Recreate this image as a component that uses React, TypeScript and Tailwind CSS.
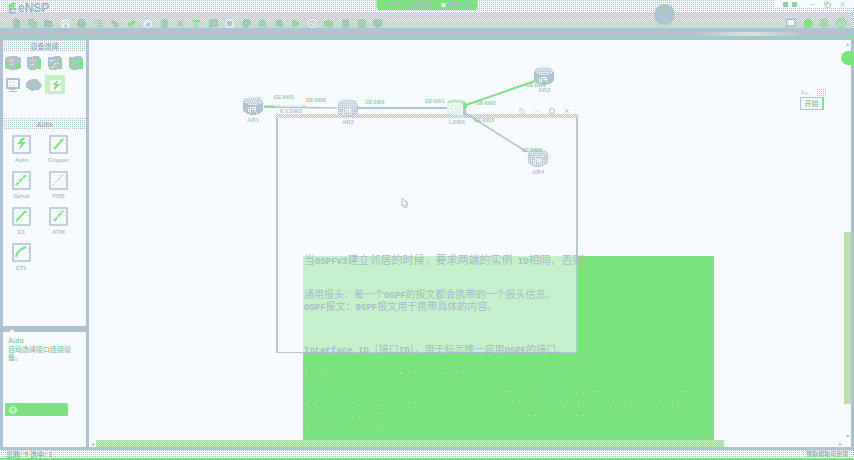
import React from "react";
import {
  FilePlus, FolderOpen, Save, Printer, Undo2, Redo2, Hand, Trash2, X, Type, Square, Palette,
  Play, Pause, StopCircle, Search, ZoomOut, Grid2x2, Monitor, List, Camera, Settings,
  MessageSquare, HelpCircle, Home, Smile, Minus, Copy,
} from "lucide-react";

const tools = [
  ["New", FilePlus], ["New from template", Copy], ["Open", FolderOpen], ["Save", Save], ["Save as", Printer],
  ["Print", List], ["Undo", Undo2], ["Redo", Redo2], ["Pan", Hand], ["Delete", Trash2], ["Remove", X],
  ["Text", Type], ["Note", MessageSquare], ["Shape", Square], ["Palette", Palette], ["Zoom in", Search],
  ["Zoom out", ZoomOut], ["Start", Play], ["Stop", StopCircle], ["Capture", Camera], ["Pause", Pause],
  ["Grid", Grid2x2], ["Screen", Monitor],
] as const;

const cables = [
  { name: "Auto", d: "M10 3 5 9h4l-2 6 7-8h-4l3-4z", fill: true },
  { name: "Copper", d: "M5 14 14 4", w: 2 },
  { name: "Serial", d: "M4 14 8 10 10 8 14 4", w: 2, dash: "4 1" },
  { name: "POS", d: "M4 14 14 4", w: 1, dash: "2 1" },
  { name: "E1", d: "M4 14 14 4", w: 2 },
  { name: "ATM", d: "M5 14 14 4", w: 2, dash: "5 1" },
  { name: "CTL", d: "M4 14C5 8 9 6 14 4", w: 2 },
];

const checker = "bg-[repeating-conic-gradient(#afc2cf_0_25%,#f7fbff_0_50%)] bg-size-[2px_2px]";
const toolbar =
  "bg-[linear-gradient(#afc2cf22_0_11px,#b9dcc9aa_11px),repeating-conic-gradient(#afc2cf_0_25%,#f7fbff_0_50%)] bg-size-[100%_100%,2px_2px]";
const dots = "bg-[conic-gradient(#afc2cf_25%,#f7fbff_0)] bg-size-[2px_2px]";
const greenChecker = "bg-[repeating-conic-gradient(#afc2cf_0_25%,#c5f1c1_0_50%)] bg-size-[2px_2px]";

function Router({ pale = false }: { pale?: boolean }) {
  return (
    <svg width="22" height="20" viewBox="0 0 22 20" aria-hidden="true" shapeRendering="crispEdges">
      <path d="M1 5Q1 1 11 1T21 5V14Q20 18 11 19Q2 18 1 14Z" fill={pale ? "#bfcdd8" : "#afc2cf"} />
      <ellipse cx="11" cy="5" rx="10" ry="4" fill="#d8e3ea" />
      <path d="M3 3h16M2 5h18M3 7h16" stroke="#afc2cf" strokeDasharray="1 1" />
      <path d="M8 17v-6h5v2h-3M12 14l3 3M6 12v4" stroke="#f7fbff" fill="none" />
      {pale && <path d="M2 8h18M2 10h18M2 12h18M2 14h18M4 16h14" stroke="#f7fbff" strokeDasharray="1 1" />}
    </svg>
  );
}

function Switch() {
  return (
    <svg width="22" height="20" viewBox="0 0 22 20" aria-hidden="true">
      <path d="M2 4Q9 0 18 3L20 5V16Q14 19 4 16L2 13Z" fill="#eef8f4" stroke="#c5f1c1" />
      <path d="M2 4Q10 2 19 5" stroke="#b0e9ae" fill="none" strokeWidth="2" />
      <path d="M17 5h3v12h-3z" fill="#afc2cf" />
      <path d="M5 8h10M4 11h10M6 14h9" stroke="#c8d5dd" strokeDasharray="2 2" />
      <path d="M17 6h3M18 9h3" stroke="#7be47f" strokeWidth="2" />
    </svg>
  );
}

function DeviceIcon({ kind }: { kind: number }) {
  return (
    <svg width="16" height="16" viewBox="0 0 16 16" aria-hidden="true" shapeRendering="crispEdges">
      {kind < 4 && (
        <>
          <path d={kind === 0 ? "M0 4Q1 1 8 1T16 4V12Q15 15 8 15T0 12Z" : "M1 2L12 1L15 4V14L5 15L1 12Z"} fill="#afc2cf" />
          <path d={kind === 0 ? "M1 7v5l4 2V9zM15 7v5l-4 2V9z" : "M12 5h3v8l-3 1z"} fill="#7be47f" />
          <path d={kind === 3 ? "M3 4l8 7M3 8l5 5M7 4l5 5" : kind === 2 ? "M4 12h2l3-4h3M3 5h3" : "M4 5h5M6 3v8M4 9h6"} stroke={kind === 3 ? "#7be47f" : "#f7fbff"} strokeDasharray={kind === 2 ? "3 1" : "1 1"} fill="none" />
          <path d="M3 2h8M2 13h9" stroke="#7be47f" strokeDasharray="1 2" />
        </>
      )}
      {kind === 4 && (
        <>
          <path d="M2 2h12v9H2z" fill="#f7fbff" stroke="#afc2cf" strokeWidth="2" />
          <path d="M5 5h6M5 8h6" stroke="#afc2cf" strokeDasharray="1 2" />
          <path d="M6 12h4v1H6z" fill="#7be47f" /><path d="M4 14h8" stroke="#afc2cf" />
        </>
      )}
      {kind === 5 && (
        <>
          <path d="M0 8Q0 4 4 3Q9 0 13 4Q17 7 15 10Q13 14 9 13Q5 15 2 12Q0 11 0 8Z" fill="#afc2cf" />
          <path d="M6 3h6M2 10h12M4 12h8" stroke="#7be47f" strokeDasharray="1 2" />
        </>
      )}
      {kind === 6 && (
        <>
          <path d="M3 3h11v11H3z" fill="#f7fbff" />
          <path d="M9 4 5 8h3L7 13l6-6h-3l1-3z" fill="#7be47f" />
        </>
      )}
    </svg>
  );
}

function PanelTitle({ children }: { children: React.ReactNode }) {
  return (
    <h2 className={`flex h-3 shrink-0 items-center justify-center text-[7px] leading-none font-bold text-[#9eb5c3] ${dots}`}>
      {children}
    </h2>
  );
}

function Latin({ children }: { children: string }) {
  return <span className="font-['Liberation_Mono',monospace] text-[9px] leading-none font-bold">{children}</span>;
}

const nodes = [
  { name: "AR1", place: "left-[153px] top-[56px]" },
  { name: "AR2", place: "left-[248px] top-[58px]", pale: true },
  { name: "LSW1", place: "left-[357px] top-[58px]", lan: true },
  { name: "AR3", place: "left-[444px] top-[26px]" },
  { name: "AR4", place: "left-[438px] top-[108px]", pale: true },
];

const ports = [
  { name: "GE 0/0/0", place: "left-[185px] top-[54px]" },
  { name: "GE 0/0/0", place: "left-[217px] top-[57px]" },
  { name: "GE 0/0/1", place: "left-[276px] top-[59px]" },
  { name: "GE 0/0/1", place: "left-[336px] top-[58px]" },
  { name: "GE 0/0/2", place: "left-[387px] top-[60px]" },
  { name: "GE 0/0/3", place: "left-[385px] top-[77px]" },
  { name: "GE 0/0/0", place: "left-[437px] top-[42px]" },
  { name: "GE 0/0/0", place: "left-[433px] top-[107px]" },
];

// Sparse highlights left by the dimmed lines of the document: [y, first x, last x].
const specks = [
  [113, 3, 33], [116, 3, 163], [117, 90, 150],
  [135, 4, 90], [138, 4, 130], [135, 175, 390], [137, 180, 290],
  [146, 3, 135], [149, 4, 90], [145, 210, 390], [150, 260, 385],
  [157, 4, 135], [161, 3, 90], [159, 170, 310],
  [171, 4, 130], [174, 4, 90],
];
const speckDash = ["1 5 1 11 1 4 1 23", "1 8 1 5 1 31", "1 6 1 19 1 3 1 12"];

export default function App() {
  return (
    <div className="relative flex h-screen flex-col overflow-hidden bg-[#afc2cf] font-['Liberation_Sans','Noto_Sans_CJK_SC',sans-serif] text-[#afc2cf]">
      <header className="relative shrink-0">
        <div className={`flex h-3 items-center justify-between pl-[6px] ${dots}`}>
          <h1 className="flex items-center pt-1 text-[12px] leading-3 font-bold text-[#9cb3c2]">
            <svg width="12" height="12" viewBox="0 0 13 12" aria-hidden="true">
              <path d="M2 4Q5 0 10 0L9 4Q5 6 2 4Z" fill="#7be47f" />
              <path d="M4 5v6h7M4 8l4-2 3 2" stroke="#9cb3c2" strokeWidth="2" fill="none" />
            </svg>
            eNSP
          </h1>
          <div className="flex h-2 items-center gap-2 self-start bg-[#f7fbff] px-2 text-[#8fd49d]">
            <span className="flex gap-1">
              <span className="size-[5px] bg-[#94cca2]" /><span className="size-[5px] bg-[#94cca2]" />
            </span>
            <button aria-label="Minimize" className="ml-1"><Minus size={7} /></button>
            <button aria-label="Restore"><Copy size={7} strokeWidth={3} /></button>
            <button aria-label="Close"><X size={7} strokeWidth={3} /></button>
          </div>
        </div>
        <div className={`flex h-4 items-end justify-between pr-2 pl-[10px] ${toolbar}`}>
          <div className="flex w-[374px] justify-between">
            {tools.map(([label, Icon], i) => (
              <button key={label} aria-label={label} className={`flex h-[10px] w-3 items-center justify-center ${i % 5 === 3 ? "text-[#f7fbff]" : i % 2 ? "text-[#84d890]" : "text-[#8ac79b]"}`}>
                <Icon size={9} strokeWidth={3} fill="#afc2cf" />
              </button>
            ))}
          </div>
          <div className="flex w-[60px] justify-between text-[#84d890]">
            <button aria-label="Messages"><MessageSquare size={10} strokeWidth={3} color="#9fb6c4" fill="#f7fbff" /></button>
            <button aria-label="Home"><Home size={10} strokeWidth={3} fill="#7be47f" /></button>
            <button aria-label="Settings"><Settings size={10} strokeWidth={3} /></button>
            <button aria-label="Help"><HelpCircle size={10} strokeWidth={3} /></button>
          </div>
        </div>
        <div className="flex h-2 items-end justify-end pr-12">
          <div className="h-1 w-28 bg-linear-to-r from-[#afc2cf] via-[#d5e3e6] to-[#afc2cf]" />
        </div>
        <div className="h-[2px] bg-[linear-gradient(90deg,#7be47f_50%,#afc2cf_0)] bg-size-[4px_2px]" />
        <div className="h-[2px]" />
        <div className="absolute top-[4px] right-[179px] size-[21px] rounded-full bg-[#afc2cf]">
          <div className="mt-[3px] ml-[6px] size-2 bg-[radial-gradient(#7be47f_1px,transparent_0)] bg-size-[4px_4px]" />
        </div>
        <div className="absolute top-0 left-1/2 flex h-[10px] w-[101px] -translate-x-1/2 items-center justify-between rounded-b-[3px] bg-[#7be47f] pr-[6px] pl-3 text-[6px] leading-none text-[#b4bfd3]">
          <span>您正在共享屏幕</span>
          <button className="flex items-center gap-[2px]"><span className="size-1 bg-[#f7fbff]" />结束共享</button>
        </div>
      </header>

      <div className="flex min-h-0 flex-1 px-[3px]">
        <aside className="flex w-[83px] shrink-0 flex-col gap-[6px]">
          <section className="flex min-h-0 flex-1 flex-col bg-[#f7fbff]">
            <PanelTitle>设备选择</PanelTitle>
            <div className="grid h-[66px] shrink-0 grid-cols-4 content-start gap-y-[3px] pt-px">
              {["Router", "Switch", "WLAN", "Firewall", "Terminal", "Cloud", "Cable"].map((n, i) => (
                <button key={n} aria-label={n} className={`flex h-[19px] items-center justify-center ${i === 6 ? "bg-[#c5f1c1]" : ""}`}>
                  <DeviceIcon kind={i} />
                </button>
              ))}
            </div>
            <PanelTitle>Auto</PanelTitle>
            <div className="grid w-[74px] grid-cols-2 gap-y-[7px] pt-[5px]">
              {cables.map((c) => (
                <button key={c.name} className="flex flex-col items-center gap-[2px] text-[6px] leading-[8px] font-bold">
                  <svg width="19" height="19" viewBox="0 0 19 19" aria-hidden="true">
                    <path d="M1 1h17v17H1z" fill="#f7fbff" stroke="#afc2cf" strokeWidth="1.5" />
                    <path d="M8 4h8v7" stroke="#c9d7e0" fill="none" strokeDasharray="1 2" />
                    <path d={c.d} fill={c.fill ? "#7be47f" : "none"} stroke="#7be47f" strokeWidth={c.w ?? 0} strokeDasharray={c.dash} />
                  </svg>
                  {c.name}
                </button>
              ))}
            </div>
          </section>
          <section className="relative flex h-[115px] shrink-0 flex-col bg-[#f7fbff] px-[2px] pt-1">
            <div className="absolute -top-[3px] left-[5px] size-0 border-x-4 border-b-4 border-x-transparent border-b-[#f7fbff]" />
            <h3 className="pl-[3px] text-[7px] leading-[10px] font-bold text-[#93d3a1]">Auto</h3>
            <p className="pl-[3px] text-[7px] leading-[8px] font-bold text-[#9fc9b2]">自动选择接口连接设备。</p>
            <button className="mt-auto mb-[31px] flex h-[13px] w-[63px] items-center gap-2 rounded-[1px] border border-[#93d3a1] bg-[#7be47f] pl-[3px] text-[6px] leading-none text-[#a9bfba]">
              <Smile size={8} strokeWidth={3} color="#f7fbff" />说点什么...
            </button>
          </section>
        </aside>

        <main className="ml-[3px] flex min-w-0 flex-1 flex-col bg-[#f7fbff]">
          <div className="flex min-h-0 flex-1">
            <div className="relative min-w-0 flex-1 overflow-hidden">
              <div className="absolute top-[216px] left-[214px] h-[184px] w-[411px] bg-[#7be47f]">
                <svg width="411" height="184" aria-hidden="true" shapeRendering="crispEdges">
                  {specks.map(([y, a, b], i) => (
                    <path key={i} d={`M${a} ${y + 0.5}H${b}`} stroke="#c5f1c1" strokeDasharray={speckDash[i % 3]} />
                  ))}
                </svg>
              </div>

              <section aria-label="LSW1" className="absolute top-[68px] left-[187px] flex h-[245px] w-[302px] flex-col">
                <div className="flex h-[6px] items-center justify-between bg-[#f7fbff] pr-2 pl-1 text-[6px] leading-none">
                  <span className="font-bold">E LSW1</span>
                  <span className="flex gap-[9px]">
                    <Copy size={6} /><Minus size={6} /><Square size={6} strokeWidth={4} /><X size={6} strokeWidth={4} />
                  </span>
                </div>
                <div className={`h-1 ${checker}`} />
                <div className="flex-1 border-x-2 border-b border-[#b5c7d2] bg-[#f7fbff]/60" />
              </section>

              <svg className="absolute inset-0 h-full w-full" aria-hidden="true">
                <path d="M175 67 248 68" stroke="#afc2cf" strokeWidth="1.5" />
                <path d="M175 66.5h11" stroke="#7be47f" strokeWidth="2" />
                <path d="M269 68h89" stroke="#afc2cf" strokeWidth="2" />
                <path d="M377 65 446 41" stroke="#7be47f" strokeWidth="2" />
                <path d="M376 73 438 112" stroke="#afc2cf" strokeWidth="1.5" />
                <path d="M213 66h4M188 66h3" stroke="#c5f1c1" strokeWidth="2" />
              </svg>

              {nodes.map((n) => (
                <div key={n.name} className={`absolute flex flex-col items-center text-[6px] leading-[8px] font-bold ${n.place}`}>
                  {n.lan ? <Switch /> : <Router pale={n.pale} />}
                  <span>{n.name}</span>
                </div>
              ))}

              {ports.map((p, i) => (
                <span key={i} className={`absolute text-[5px] leading-[7px] font-bold whitespace-nowrap text-[#97c8a6] ${p.place}`}>
                  {p.name}
                </span>
              ))}

              <article className="absolute top-[215px] left-[215px] text-[10px] leading-[11px] whitespace-nowrap text-[#a6bbc4]">
                <p className="text-[11px]">当<Latin>OSPFV3</Latin>建立邻居的时候，要求两端的实例<Latin> ID</Latin>相同，否则</p>
                <p className="mt-[22px]">通用报头：每一个<Latin>OSPF</Latin>的报文都会携带的一个报头信息。</p>
                <p><Latin>OSPF</Latin>报文：<Latin>OSPF</Latin>报文用于携带具体的内容。</p>
                <p className="mt-[31px]"><Latin>Interface ID</Latin>（接口<Latin>ID</Latin>），用于标示唯一启用<Latin>OSPF</Latin>的接口。</p>
              </article>

              <svg className="absolute top-[157px] left-[312px]" width="8" height="12" viewBox="0 0 8 12" aria-hidden="true">
                <path d="M1 1v8l2-1 1 3 2-1-1-3h2z" fill="#f7fbff" stroke="#afc2cf" />
              </svg>

              <section className="absolute top-[48px] right-[18px] flex w-[28px] flex-col items-center">
                <div className="flex h-[9px] w-full items-center justify-between pl-[3px] text-[6px] leading-none">
                  Fo...<span className={`h-2 w-[10px] ${dots}`} />
                </div>
                <button className="h-[13px] w-6 border border-r-2 border-[#afc2cf] border-r-[#7be47f] bg-[#f7fbff] text-[7px] leading-none font-bold text-[#93cfa2]">开始</button>
              </section>
            </div>
            <div className="flex w-[7px] shrink-0 flex-col items-center text-[6px] leading-[8px] text-[#93cfa2]">
              <span>▴</span>
              <div className="flex w-full flex-1 flex-col">
                <div className="flex-[184]" />
                <div className={`flex-[172] ${greenChecker}`} />
                <div className="flex-[28]" />
              </div>
              <span>▾</span>
            </div>
          </div>
          <div className="flex h-[7px] shrink-0 items-center text-[6px] leading-none text-[#93cfa2]">
            <span className="w-[7px] text-center">◂</span>
            <div className="flex h-full flex-1">
              <div className={`flex-[628] ${greenChecker}`} />
              <div className="flex-[115]" />
            </div>
            <span className="w-3">▸</span>
          </div>
        </main>
      </div>

      <footer className={`mt-[3px] flex h-[10px] shrink-0 items-center justify-between border-b-2 border-[#7be47f] px-[6px] text-[6px] leading-none font-bold text-[#94b9ad] ${dots}`}>
        <span className="text-[7px]">总数: 5 选中: 1</span>
        <a href="#help">获取帮助与反馈</a>
      </footer>
      <button aria-label="Open side panel" className="absolute top-[51px] right-0 h-[14px] w-[13px] rounded-l-full bg-[#7be47f]" />
    </div>
  );
}
